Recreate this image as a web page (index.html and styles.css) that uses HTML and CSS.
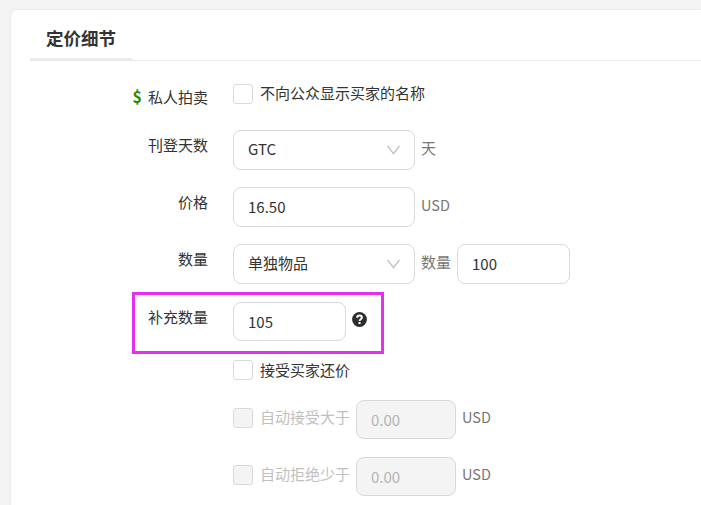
FILE: index.html
```
<!DOCTYPE html>
<html lang="zh-CN">
<head>
  <meta charset="UTF-8" />
  <meta name="viewport" content="width=device-width, initial-scale=1.0"/>
  <title>定价细节</title>
  <link rel="stylesheet" href="styles.css">
</head>
<body>

  <div class="card">
    <div class="tabs">
      <h2 class="tab">定价细节</h2>
    </div>

    <div class="row row-private">
      <div class="label"><span class="dollar">$</span>私人拍卖</div>
      <div class="controls">
        <span class="check"></span>
        <span class="check-text">不向公众显示买家的名称</span>
      </div>
    </div>

    <div class="row">
      <div class="label">刊登天数</div>
      <div class="controls">
        <div class="field field-wide">
          <span>GTC</span>
          <svg class="arrow" width="14" height="10" viewBox="0 0 14 10"><path d="M1.5 .8 7.5 8.6 13.5 .8" /></svg>
        </div>
        <span class="unit">天</span>
      </div>
    </div>

    <div class="row">
      <div class="label">价格</div>
      <div class="controls">
        <div class="field field-wide field-input"><span>16.50</span></div>
        <span class="unit usd">USD</span>
      </div>
    </div>

    <div class="row">
      <div class="label">数量</div>
      <div class="controls">
        <div class="field field-wide">
          <span>单独物品</span>
          <svg class="arrow" width="14" height="10" viewBox="0 0 14 10"><path d="M1.5 .8 7.5 8.6 13.5 .8" /></svg>
        </div>
        <span class="unit">数量</span>
        <div class="field field-mid field-input"><span>100</span></div>
      </div>
    </div>

    <div class="row row-restock">
      <div class="highlight"></div>
      <div class="label">补充数量</div>
      <div class="controls">
        <div class="field field-mid field-input field-short"><span>105</span></div>
        <svg class="help" width="15" height="15" viewBox="0 0 15 15">
          <circle cx="7.5" cy="7.5" r="7.4" />
          <path d="M5.1 5.7C5.2 4.2 6.2 3.6 7.5 3.6s2.4.8 2.4 2c0 1.6-2.3 1.6-2.3 3.3" />
          <rect x="6.5" y="10" width="2.1" height="2" />
        </svg>
      </div>
    </div>

    <div class="row row-offer">
      <div class="label"></div>
      <div class="controls">
        <span class="check"></span>
        <span class="check-text">接受买家还价</span>
      </div>
    </div>

    <div class="row row-auto">
      <div class="label"></div>
      <div class="controls">
        <span class="check disabled"></span>
        <span class="check-text muted">自动接受大于</span>
        <div class="field field-small field-input field-short disabled"><span>0.00</span></div>
        <span class="unit usd">USD</span>
      </div>
    </div>

    <div class="row row-auto">
      <div class="label"></div>
      <div class="controls">
        <span class="check disabled"></span>
        <span class="check-text muted">自动拒绝少于</span>
        <div class="field field-small field-input field-short disabled"><span>0.00</span></div>
        <span class="unit usd">USD</span>
      </div>
    </div>
  </div>

</body>
</html>
```
FILE: styles.css
```
* { box-sizing: border-box; }
body {
  margin: 0;
  padding: 10px 0 0 11px;
  height: 505px;
  overflow: hidden;
  background-color: #f4f4f4;
  color: #333;
  font-family: "Noto Sans CJK SC", sans-serif;
  font-size: 15px;
  line-height: 20px;
}
.card {
  height: 520px;
  padding-left: 19px;
  background-color: #fff;
  border-radius: 6px 0 0 0;
  box-shadow: 0 0 3px rgba(0, 0, 0, 0.08);
}
.tabs {
  display: flex;
  height: 51px;
  margin-bottom: 12px;
  border-bottom: 1px solid #ebebeb;
}
.tab {
  height: 51px;
  margin: 0;
  padding: 18px 16px 0;
  border-bottom: 3px solid #ebebeb;
  font-size: 17.5px;
  line-height: 20px;
}
.row {
  display: flex;
  position: relative;
  height: 57px;
}
.label {
  width: 178px;
  margin-right: 25px;
  padding-top: 5px;
  text-align: right;
}
.row-private .label { padding-top: 13px; }
.dollar {
  margin-right: 6px;
  color: #2b8a00;
  font-size: 16px;
  font-weight: bold;
}
.controls {
  display: flex;
  align-items: center;
  height: 40px;
}
.field {
  display: flex;
  align-items: center;
  justify-content: space-between;
  height: 40px;
  padding: 0 14px;
  border: 1px solid #d9d9d9;
  border-radius: 8px;
}
.field span { padding-bottom: 2px; }
.field-wide { width: 182px; }
.field-mid { width: 113px; }
.field-small { width: 100px; }
.field-short { height: 39px; }
.field-input span { padding: 0; }
.field-short span { padding-top: 1px; }
.arrow {
  fill: none;
  stroke: #bfbfbf;
  stroke-width: 1.3;
}
.unit {
  margin: 0 6px;
  padding-bottom: 4px;
  color: #777;
}
.usd { font-size: 14.5px; }
.check {
  width: 20px;
  height: 20px;
  border: 1px solid #d9d9d9;
  border-radius: 3px;
}
.check-text { margin-left: 7px; }
.row-private .controls { padding-top: 2px; }
.row-private .check-text { padding-bottom: 3px; }
.row-restock {
  height: 59px;
  padding-top: 1px;
}
.row-restock .controls { height: 39px; }
.highlight {
  position: absolute;
  left: 102px;
  top: -9px;
  width: 252px;
  height: 62px;
  border: 3px solid #e52ff0;
}
.help {
  margin-left: 6px;
  margin-top: -4px;
  fill: #2d2d2d;
}
.help path {
  fill: none;
  stroke: #fff;
  stroke-width: 2;
}
.help rect { fill: #fff; }
.row-offer { height: 40px; }
.row-offer .controls { height: 20px; }
.row-auto .controls { height: 39px; }
.row-auto .check { margin-top: -3px; }
.row-auto .check-text { margin-right: 6px; padding-bottom: 5px; }
.row-auto .unit { padding-bottom: 5px; }
.muted { color: #bfbfbf; }
.disabled {
  background-color: #f4f4f4;
  color: #b5b5b5;
}
```
